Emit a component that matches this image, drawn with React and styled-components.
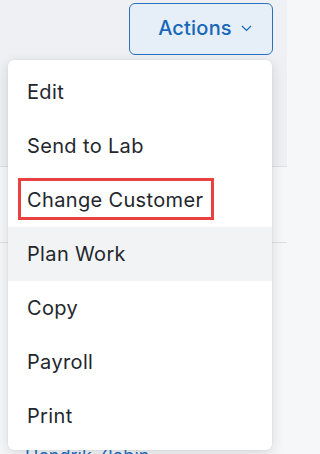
import React, { Component } from 'react';
import styled, { createGlobalStyle } from 'styled-components';

const GlobalStyle = createGlobalStyle`
  html, body {
    margin: 0;
    padding: 0;
    background: #f6f7f8;
  }
  body {
    font-family: Inter, "Liberation Sans", sans-serif;
    -webkit-font-smoothing: antialiased;
  }
`;

const Page = styled.div`
  position: relative;
  width: 287px;
  height: 454px;
  overflow: hidden;
  background: #f6f7f8;
`;

const Header = styled.div`
  height: 167px;
  background: #eef0f3;
  border-bottom: 1px solid #dcdfe3;
  display: flex;
  justify-content: flex-end;
  align-items: flex-start;
  padding: 3px 14px 0 0;
  box-sizing: border-box;
`;

const Row = styled.div`
  height: 75px;
  border-bottom: 1px solid #dcdfe3;
  display: flex;
  align-items: center;
  font-size: 26px;
  font-weight: 600;
  color: #1c2b45;
  margin-left: -14px;
`;

const LinkRow = styled.div`
  padding: 202px 0 0 25px;
  font-size: 18px;
  color: #1f6fbf;
`;

const ActionsButton = styled.button`
  display: flex;
  align-items: center;
  gap: 9px;
  width: 144px;
  height: 52px;
  justify-content: center;
  border: 1px solid #2a72c0;
  border-radius: 6px;
  background: #e6eef8;
  color: #1767b8;
  font-family: Inter, "Liberation Sans", sans-serif;
  font-size: 20px;
  font-weight: 500;
  letter-spacing: 0.2px;
  padding: 0 0 2px 8px;
  cursor: pointer;
`;

const Menu = styled.ul`
  position: absolute;
  top: 60px;
  left: 8px;
  width: 264px;
  margin: 0;
  padding: 5px 0 7px;
  list-style: none;
  background: #ffffff;
  border-radius: 6px;
  box-shadow: 0 4px 14px rgba(30, 40, 60, 0.14), 0 0 2px rgba(30, 40, 60, 0.08);
  box-sizing: border-box;
`;

const MenuItem = styled.li`
  position: relative;
  height: 54px;
  display: flex;
  align-items: center;
  padding-left: 19px;
  font-size: 20px;
  letter-spacing: 0.35px;
  color: #23272d;
  background: ${props => (props.$hover ? '#f1f3f5' : 'transparent')};
`;

const Highlight = styled.span`
  position: absolute;
  left: 10px;
  top: 5px;
  width: 196px;
  height: 42px;
  border: 3px solid #e8413f;
  box-sizing: border-box;
  pointer-events: none;
`;

const items = ['Edit', 'Send to Lab', 'Change Customer', 'Plan Work', 'Copy', 'Payroll', 'Print'];

export default class App extends Component {
  render() {
    return (
      <Page>
        <GlobalStyle />
        <Header>
          <ActionsButton>
            Actions
            <svg width="11" height="7" viewBox="0 0 11 7" fill="none">
              <path d="M1 1l4.5 4.5L10 1" stroke="#1767b8" strokeWidth="1.2" />
            </svg>
          </ActionsButton>
        </Header>
        <Row>r</Row>
        <LinkRow>Hendrik Zlobin</LinkRow>
        <Menu>
          {items.map(item => (
            <MenuItem key={item} $hover={item === 'Plan Work'}>
              {item}
              {item === 'Change Customer' && <Highlight />}
            </MenuItem>
          ))}
        </Menu>
      </Page>
    );
  }
}
